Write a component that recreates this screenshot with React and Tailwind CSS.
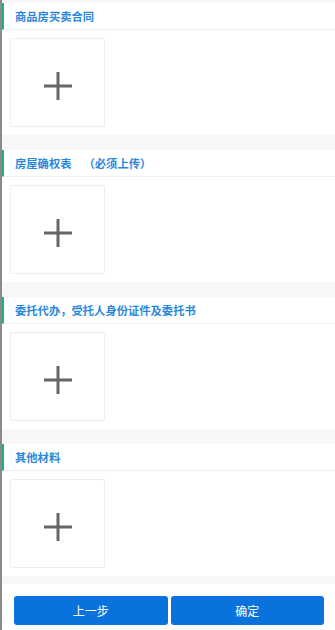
import React from 'react';

const sections = [
  { title: '商品房买卖合同' },
  { title: '房屋确权表', note: '（必须上传）' },
  { title: '委托代办，受托人身份证件及委托书' },
  { title: '其他材料' },
];

const Plus = () => (
  <svg width="28" height="28" viewBox="0 0 28 28" className="mt-[7px]">
    <rect x="0" y="12.5" width="28" height="3" fill="#666666" />
    <rect x="12.5" y="0" width="3" height="28" fill="#666666" />
  </svg>
);

const Section = ({ title, note, last }) => (
  <div>
    <div className="h-[27px] flex items-center border-l-2 border-[#22ab8a] pl-[11px] border-b border-b-[#efefef]">
      <span className="text-[11.3px] font-bold text-[#2a88dc]">{title}</span>
      {note && <span className="text-[11.3px] font-bold text-[#2a88dc] ml-[12px]">{note}</span>}
    </div>
    <div className="pl-[8px] pt-[8px] pb-[8px]">
      <div className="w-[95px] h-[89px] border border-[#eeeeee] rounded-[2px] flex items-center justify-center">
        <Plus />
      </div>
    </div>
    <div className={last ? 'h-[8px] bg-[#f7f7f7]' : 'h-[15px] bg-[#f7f7f7]'} />
  </div>
);

export default function App() {
  return (
    <div
      className="w-[335px] min-h-[630px] bg-white border-l-2 border-[#8a8a8a]"
      style={{ fontFamily: '"Noto Sans CJK SC", "Noto Sans", sans-serif' }}
    >
      <div className="h-[3px] bg-[#f7f7f7]" />
      {sections.map((s, i) => (
        <Section key={i} title={s.title} note={s.note} last={i === sections.length - 1} />
      ))}
      <div className="flex gap-[3px] pl-[12px] pr-[11px] pt-[12px] pb-[6px]">
        <button className="flex-1 h-[29px] rounded-[3px] bg-[#0a72dc] text-white text-[12px]">上一步</button>
        <button className="flex-1 h-[29px] rounded-[3px] bg-[#0a72dc] text-white text-[12px]">确定</button>
      </div>
    </div>
  );
}
